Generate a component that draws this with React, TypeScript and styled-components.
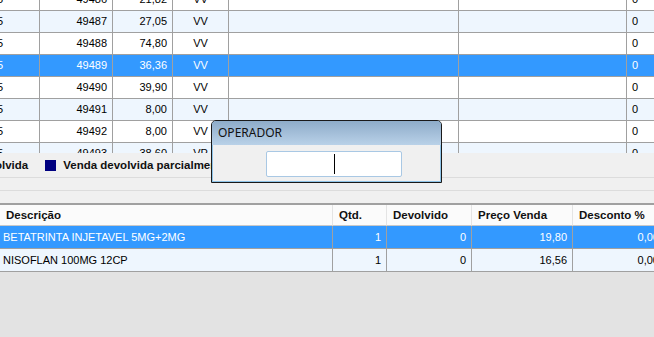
import React from 'react';
import styled, { createGlobalStyle } from 'styled-components';

const Global = createGlobalStyle`
  html, body {
    margin: 0;
    padding: 0;
    width: 654px;
    height: 337px;
    overflow: hidden;
    background: #e3e3e3;
    font-family: 'Liberation Sans', Arial, sans-serif;
  }
`;

const Screen = styled.div`
  position: relative;
  width: 654px;
  height: 337px;
  overflow: hidden;
  background: #e3e3e3;
  display: flex;
  flex-direction: column;
`;

const SalesArea = styled.div`
  height: 153px;
  overflow: hidden;
  background: #fff;
  flex-shrink: 0;
`;

const SalesGrid = styled.div`
  margin-top: -11px;
  display: grid;
  grid-template-columns: 40px 73px 60px 56px 230px 168px 40px;
`;

const Cell = styled.div<{ $align?: string; $row: number; $selected?: boolean }>`
  height: 22px;
  box-sizing: border-box;
  border-right: 1px solid #a0a0a0;
  border-bottom: 1px solid #a0a0a0;
  font-size: 11px;
  line-height: 21px;
  padding: 0 5px;
  text-align: ${(p) => p.$align || 'left'};
  white-space: nowrap;
  overflow: hidden;
  background: ${(p) => (p.$selected ? '#3399ff' : p.$row % 2 ? '#eef6fe' : '#fff')};
  color: ${(p) => (p.$selected ? '#fff' : '#000')};
`;

const FirstCell = styled(Cell)`
  padding-left: 0;
  text-indent: -3px;
`;

const LegendBar = styled.div`
  height: 24px;
  background: #f0f0f0;
  display: flex;
  align-items: center;
  font-size: 11.5px;
  font-weight: bold;
  color: #111;
  border-bottom: 1px solid #dcdcdc;
`;

const LegendText = styled.span`
  margin-left: -5px;
  margin-right: 17px;
`;

const Swatch = styled.span`
  width: 11px;
  height: 11px;
  background: #000080;
  display: inline-block;
  margin-right: 7px;
  margin-top: 1px;
`;

const Strip = styled.div<{ $h: number; $line: string; $w?: number }>`
  height: ${(p) => p.$h}px;
  background: #f0f0f0;
  border-bottom: ${(p) => p.$w || 1}px solid ${(p) => p.$line};
`;

const ItemsGrid = styled.div`
  display: grid;
  grid-template-columns: 333px 54px 85px 101px 92px;
  background: #fff;
`;

const HeadCell = styled.div`
  height: 21px;
  box-sizing: border-box;
  background: #fbfbfb;
  border-right: 1px solid #e4e4e4;
  border-bottom: 1px solid #c8c8c8;
  font-size: 11.5px;
  font-weight: bold;
  line-height: 21px;
  padding: 0 6px;
  color: #111;
  white-space: nowrap;
  overflow: hidden;
`;

const ItemCell = styled(Cell)`
  height: 23px;
  line-height: 22px;
  padding: 0 5px 0 3px;
`;

const Dialog = styled.div`
  position: absolute;
  left: 211px;
  top: 120px;
  width: 231px;
  height: 63px;
  box-sizing: border-box;
  border: 1px solid #1a1a1a;
  border-radius: 5px 5px 0 0;
  overflow: hidden;
  display: flex;
  flex-direction: column;
  background: #f0f0f0;
  box-shadow: inset 0 0 0 1px #8fc4e8;
`;

const DialogTitle = styled.div`
  height: 24px;
  flex-shrink: 0;
  background: linear-gradient(#8eacc9, #b9d1e8);
  font-family: 'Noto Sans', 'DejaVu Sans', sans-serif;
  font-size: 12px;
  line-height: 24px;
  padding-left: 6px;
  color: #111;
`;

const DialogBody = styled.div`
  flex: 1;
  display: flex;
  justify-content: center;
  padding-top: 6px;
  padding-left: 14px;
`;

const Field = styled.div`
  width: 136px;
  height: 26px;
  box-sizing: border-box;
  background: #fff;
  border: 1px solid #a9c8e4;
  border-radius: 2px;
  position: relative;
`;

const Caret = styled.span`
  position: absolute;
  left: 67px;
  top: 2px;
  width: 1px;
  height: 20px;
  background: #000;
`;

const sales = [
  { id: '49486', v: '21,82', t: 'VV' },
  { id: '49487', v: '27,05', t: 'VV' },
  { id: '49488', v: '74,80', t: 'VV' },
  { id: '49489', v: '36,36', t: 'VV' },
  { id: '49490', v: '39,90', t: 'VV' },
  { id: '49491', v: '8,00', t: 'VV' },
  { id: '49492', v: '8,00', t: 'VV' },
  { id: '49493', v: '38,60', t: 'VP' },
];

const items = [
  { d: 'BETATRINTA INJETAVEL 5MG+2MG', q: '1', dev: '0', p: '19,80', ds: '0,00' },
  { d: 'NISOFLAN 100MG 12CP', q: '1', dev: '0', p: '16,56', ds: '0,00' },
];

const App: React.FC = () => {
  return (
    <Screen>
      <Global />
      <SalesArea>
        <SalesGrid>
          {sales.map((s, i) => {
            const sel = s.id === '49489';
            return (
              <React.Fragment key={s.id}>
                <FirstCell $row={i} $selected={sel}>5</FirstCell>
                <Cell $row={i} $selected={sel} $align="right">{s.id}</Cell>
                <Cell $row={i} $selected={sel} $align="right">{s.v}</Cell>
                <Cell $row={i} $selected={sel} $align="center">{s.t}</Cell>
                <Cell $row={i} $selected={sel} />
                <Cell $row={i} $selected={sel} />
                <Cell $row={i} $selected={sel}>0</Cell>
              </React.Fragment>
            );
          })}
        </SalesGrid>
      </SalesArea>
      <LegendBar>
        <LegendText>olvida</LegendText>
        <Swatch />
        <span>Venda devolvida parcialmente</span>
      </LegendBar>
      <Strip $h={12} $line="#dcdcdc" />
      <Strip $h={12} $line="#a0a0a0" $w={2} />
      <ItemsGrid>
        <HeadCell>Descrição</HeadCell>
        <HeadCell>Qtd.</HeadCell>
        <HeadCell>Devolvido</HeadCell>
        <HeadCell>Preço Venda</HeadCell>
        <HeadCell>Desconto %</HeadCell>
        {items.map((it, i) => {
          const sel = i === 0;
          return (
            <React.Fragment key={it.d}>
              <ItemCell $row={1} $selected={sel}>{it.d}</ItemCell>
              <ItemCell $row={1} $selected={sel} $align="right">{it.q}</ItemCell>
              <ItemCell $row={1} $selected={sel} $align="right">{it.dev}</ItemCell>
              <ItemCell $row={1} $selected={sel} $align="right">{it.p}</ItemCell>
              <ItemCell $row={1} $selected={sel} $align="right">{it.ds}</ItemCell>
            </React.Fragment>
          );
        })}
      </ItemsGrid>
      <Dialog>
        <DialogTitle>OPERADOR</DialogTitle>
        <DialogBody>
          <Field>
            <Caret />
          </Field>
        </DialogBody>
      </Dialog>
    </Screen>
  );
};

export default App;
